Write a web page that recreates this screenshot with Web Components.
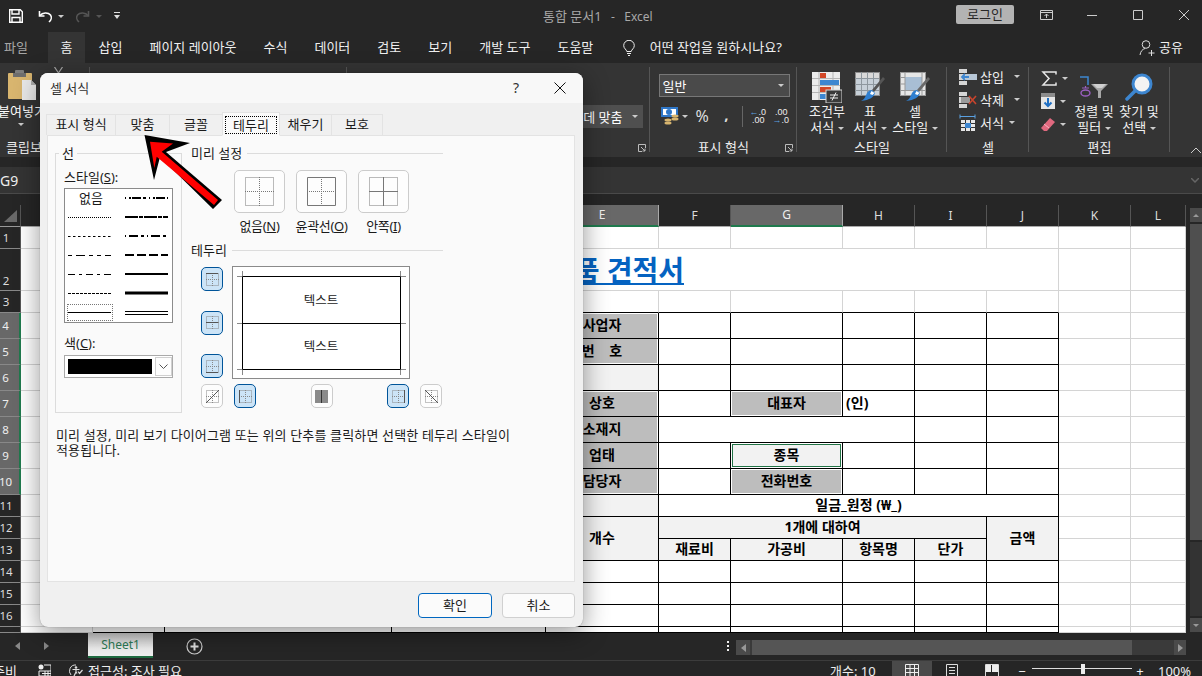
<!DOCTYPE html>
<html lang="ko">
<head>
<meta charset="utf-8">
<title>통합 문서1 - Excel</title>
<style>
  html, body { margin: 0; height: 100%; }
  body {
    position: relative;
    width: 1202px;
    height: 676px;
    overflow: hidden;
    display: flex;
    flex-direction: column;
    background: #262626;
    color: #fff;
    font: 13px/16px "Noto Sans", "Noto Sans CJK KR", sans-serif;
  }
</style>
</head>
<body>
<xl-titlebar></xl-titlebar>
<xl-tabs></xl-tabs>
<xl-ribbon></xl-ribbon>
<xl-formula></xl-formula>
<xl-sheet></xl-sheet>
<xl-sheetbar></xl-sheetbar>
<xl-status></xl-status>
<xl-dialog></xl-dialog>
<xl-arrow></xl-arrow>

<script>
  const ICONS = {
    save: '<svg width="14" height="14" viewBox="0 0 14 14"><path d="M.7.7h10.6l2 2v10.6H.7z" fill="none" stroke="#fff" stroke-width="1.4"/><path d="M3 1v4h7V1M3 13V8.500h8V13" fill="none" stroke="#fff" stroke-width="1.4"/></svg>',
    undo: '<svg width="15" height="13" viewBox="0 0 15 13"><path d="M1.500 1v5h5" fill="none" stroke="#fff" stroke-width="1.600"/><path d="M2 5.500c2.500-3 8-3.500 10.500-.5 1.500 2 .8 5-1.500 7" fill="none" stroke="#fff" stroke-width="1.600"/></svg>',
    redo: '<svg width="15" height="13" viewBox="0 0 15 13"><path d="M13.500 1v5h-5" fill="none" stroke="#555" stroke-width="1.600"/><path d="M13 5.500c-2.500-3-8-3.500-10.500-.5C1 7 1.700 10 4 12" fill="none" stroke="#555" stroke-width="1.600"/></svg>',
    custom: '<svg width="6" height="8" viewBox="0 0 6 8"><path d="M0 .5h6" stroke="#ddd"/><path d="M0 3h6L3 7z" fill="#ddd"/></svg>',
    ribbonopt: '<svg width="13" height="10" viewBox="0 0 13 10"><path d="M.5.500h12v9H.5zM.5 2.500h12" fill="none" stroke="#ccc"/><path d="M6.500 8V4M4.500 6l2-2 2 2" fill="none" stroke="#ccc"/></svg>',
    min: '<svg width="10" height="10" viewBox="0 0 10 10"><path d="M0 5.500h10" stroke="#ccc"/></svg>',
    max: '<svg width="10" height="10" viewBox="0 0 10 10"><path d="M.5.500h9v9h-9z" fill="none" stroke="#ccc"/></svg>',
    close: '<svg width="10" height="10" viewBox="0 0 10 10"><path d="M0 0l10 10M10 0L0 10" stroke="#ccc"/></svg>',
    bulb: '<svg width="12" height="16" viewBox="0 0 12 16"><path d="M3.800 11.500C3.500 9.500 .7 8.500.7 5.600a5.300 5.300 0 0 1 10.600 0c0 2.900-2.800 3.900-3.100 5.900zM4 13.500h4M5 15.500h2" fill="none" stroke="#eee"/></svg>',
    person: '<svg width="16" height="16" viewBox="0 0 16 16"><circle cx="7" cy="4.500" r="3.800" fill="none" stroke="#ddd"/><path d="M1 15c.5-3.500 2.500-6 5-6.500M9.500 13h6M12.500 10v6" fill="none" stroke="#ddd"/></svg>',
    paste: '<svg width="30" height="30" viewBox="0 0 30 30"><rect x="1" y="3" width="24" height="26" rx="1" fill="#d8b56f"/><rect x="8" y="0" width="9" height="6" rx="1" fill="#7d7d7d"/><rect x="6" y="3" width="13" height="4" fill="#6e6e6e"/><path d="M15 10h9l5 5v15H15z" fill="#e8e8e8"/><path d="M24 10v5h5" fill="#aaa"/></svg>',
    cut: '<svg width="9" height="8" viewBox="0 0 9 8"><path d="M.5 0l4 6M8.500 0l-4 6" fill="none" stroke="#aaa" stroke-width="1.200"/></svg>',
    cond: '<svg width="30" height="31" viewBox="0 0 30 31"><rect width="28" height="28" fill="#ececec"/><path d="M0 6.500h28M0 13.500h28M0 20.500h28M7 0v28M21 0v28" stroke="#b5b5b5"/><rect x="8" y="1" width="6" height="5" fill="#d24726"/><rect x="8" y="8" width="19" height="5" fill="#3d86d0"/><rect x="8" y="15" width="11" height="5" fill="#d24726"/><rect x="8" y="22" width="7" height="5" fill="#3d86d0"/><rect x="14" y="18" width="16" height="13" fill="#3a3a3a" stroke="#d8d8d8"/><path d="M18 23h8M18 26h8M24 20.500l-4 8" stroke="#eee" fill="none"/></svg>',
    table: '<svg width="30" height="30" viewBox="0 0 30 30"><rect x=".5" y=".5" width="24" height="23" fill="#c7d0d8" stroke="#8c8c8c"/><rect x="1" y="1" width="23" height="5" fill="#d9d9d9"/><path d="M0 6.500h24M0 12.500h24M0 18.500h24M6.500 0v24M12.500 0v24M18.500 0v24" stroke="#8e979e"/><path d="M30 7l-2-2-11 13 2 2z" fill="#555"/><path d="M17 18l3 3c-1 4-5 7-14 8 4-2 4-4 6-8 1-2 3-3 5-3z" fill="#2f7fd0"/><path d="M16.500 19l3 2-2 2-2.500-1z" fill="#fff"/></svg>',
    cellstyle: '<svg width="30" height="30" viewBox="0 0 30 30"><rect x=".5" y=".5" width="25" height="23" fill="#e6e6e6" stroke="#999"/><rect x="5" y="5" width="17" height="14" fill="#a8bed4"/><path d="M0 5.500h5M0 12h5M0 18.500h25M5 0v24M22 0v24" stroke="#999"/><path d="M30 7l-2-2-11 13 2 2z" fill="#6a6a6a"/><path d="M17 18l3 3c-1 4-5 7-14 8 4-2 4-4 6-8 1-2 3-3 5-3z" fill="#2f7fd0"/><path d="M16.500 19l3 2-2 2-2.500-1z" fill="#fff"/></svg>',
    insert: '<svg width="18" height="16" viewBox="0 0 18 16"><path d="M0 0h8v16H0z" fill="#d5d5d5"/><path d="M0 4.500h8M0 11.500h8" stroke="#333" stroke-width="1"/><rect x="7" y="5" width="11" height="6" fill="#b7c7d6"/><path d="M10 8H3M6 5L3 8l3 3" fill="none" stroke="#3d86d0" stroke-width="1.800"/></svg>',
    del: '<svg width="18" height="16" viewBox="0 0 18 16"><path d="M0 0h8v16H0z" fill="#d5d5d5"/><path d="M0 4.500h8M0 11.500h8" stroke="#333"/><rect x="2" y="5" width="9" height="6" fill="#9a9a9a"/><path d="M10 4l7 8M17 4l-7 8" stroke="#c8442c" stroke-width="1.600"/></svg>',
    format: '<svg width="18" height="17" viewBox="0 0 18 17"><path d="M1 2.500h15M1 .5v4M16 .5v4" stroke="#5aa0e0" fill="none"/><rect x="2" y="6" width="14" height="11" fill="#e6e6e6"/><path d="M2 9.500h14M2 13.500h14M6.500 6v11M11.500 6v11" stroke="#333"/><rect x="6" y="9" width="6" height="5" fill="#3d86d0"/></svg>',
    sigma: '<svg width="16" height="15" viewBox="0 0 16 15"><path d="M15 3.500V1H2l6 6.500L2 14h13v-2.500" fill="none" stroke="#e6e6e6" stroke-width="1.500"/></svg>',
    fill: '<svg width="14" height="16" viewBox="0 0 14 16"><rect width="14" height="16" fill="#e6e6e6"/><rect width="14" height="4" fill="#8c8c8c"/><path d="M7 5v8M3.500 9.500L7 13l3.500-3.500" fill="none" stroke="#1f6fc4" stroke-width="2"/></svg>',
    eraser: '<svg width="14" height="13" viewBox="0 0 14 13"><path d="M9 0l5 4-8 9H3l-3-3z" fill="#e0697f"/><path d="M3 6l5 4" stroke="#f5b5c0"/></svg>',
    sort: '<svg width="30" height="22" viewBox="0 0 30 22"><path d="M1 1h8v8" fill="none" stroke="#3d86d0" stroke-width="1.500"/><path d="M3 12h7M6.500 10v2" stroke="#9b5fc0" fill="none" stroke-width="1.200"/><ellipse cx="6.500" cy="17" rx="4.500" ry="3" fill="none" stroke="#9b5fc0" stroke-width="1.400"/><path d="M12 8h17l-7 7v7h-3v-7z" fill="#a6a6a6"/><path d="M14 8h13l-4 4h-5z" fill="#d0d0d0"/></svg>',
    find: '<svg width="28" height="28" viewBox="0 0 28 28"><circle cx="17" cy="11" r="9" fill="#f3f3f3" stroke="#3d86d0" stroke-width="3"/><path d="M10 18L2 26" stroke="#3d86d0" stroke-width="3.500" stroke-linecap="round"/></svg>',
    money: '<svg width="18" height="18" viewBox="0 0 18 18"><rect x="0" y="0" width="17" height="10" fill="#2f77c8"/><rect x="2" y="2" width="13" height="6" fill="#fff"/><circle cx="8" cy="5" r="3" fill="#2f77c8"/><ellipse cx="14" cy="9" rx="3.500" ry="1.500" fill="#d8b56f"/><ellipse cx="14" cy="12" rx="3.500" ry="1.500" fill="#d8b56f"/><ellipse cx="7" cy="13" rx="3.500" ry="1.500" fill="#d8b56f"/><ellipse cx="7" cy="16" rx="3.500" ry="1.500" fill="#d8b56f"/></svg>',
    launcher: '<svg width="8" height="8" viewBox="0 0 8 8"><path d="M7.500 4V.5H.5v7H4M3 3l4 4M7 4.500V7H4.500" fill="none" stroke="#bbb"/></svg>',
    chevup: '<svg width="10" height="5" viewBox="0 0 10 5"><path d="M0 5l5-5 5 5" fill="none" stroke="#ccc"/></svg>',
    chevdown: '<svg width="8" height="5" viewBox="0 0 8 5"><path d="M0 0l4 4 4-4" fill="none" stroke="#666" stroke-width="1.500"/></svg>',
    macro: '<svg width="13" height="12" viewBox="0 0 13 12"><circle cx="3" cy="3" r="2.500" fill="#eee"/><path d="M6 1h7v11H1V7h12M4 9.500h9M7 7v5M10 7v5" fill="none" stroke="#eee"/></svg>',
    access: '<svg width="14" height="13" viewBox="0 0 14 13"><path d="M2 11A6 6 0 0 1 7 1" fill="none" stroke="#ddd"/><circle cx="7" cy="3.500" r="1.300" fill="#ddd"/><path d="M3.500 5.500h7M7 5.500V8M5 12l2-4 1 1.500M9 7.500l1.500 2 3-3.500" fill="none" stroke="#ddd" stroke-width="1.200"/></svg>',
    normal: '<svg width="14" height="13" viewBox="0 0 14 13"><path d="M.5.500h13v12H.5zM.5 4.500h13M.5 8.500h13M5 .5v12M9.500.5v12" fill="none" stroke="#eee"/></svg>',
    page: '<svg width="14" height="13" viewBox="0 0 14 13"><path d="M1.500.500h11v12h-11zM4 3.500h6M4 6.500h6M4 9.500h6" fill="none" stroke="#ddd"/></svg>',
    pagebreak: '<svg width="14" height="13" viewBox="0 0 14 13"><path d="M.5.500h13v12H.5z" fill="none" stroke="#ddd"/><rect x="1" y="1" width="5" height="7" fill="#eee"/><rect x="7" y="1" width="6" height="7" fill="#eee"/></svg>',
    plusc: '<svg width="17" height="17" viewBox="0 0 17 17"><circle cx="8.500" cy="8.500" r="7.500" fill="none" stroke="#ccc" stroke-width="1.200"/><path d="M8.500 4.500v8M4.500 8.500h8" stroke="#ddd" stroke-width="2"/></svg>'
  };

  class XlIcon extends HTMLElement {
    connectedCallback() {
      const shadow = this.attachShadow({ mode: "open" });
      shadow.innerHTML = `<style>:host{display:inline-flex;line-height:0}</style>${ICONS[this.getAttribute("name")] || ""}`;
    }
  }

  class XlCaret extends HTMLElement {
    connectedCallback() {
      const color = this.getAttribute("color") || "#ccc";
      this.attachShadow({ mode: "open" }).innerHTML = `<style>
        :host{display:inline-block;width:0;height:0;vertical-align:middle;
          border-left:3.5px solid transparent;border-right:3.5px solid transparent;border-top:3.5px solid ${color}}
      </style>`;
    }
  }

  class XlTitlebar extends HTMLElement {
    connectedCallback() {
      this.attachShadow({ mode: "open" }).innerHTML = `<style>
        :host{display:flex;height:32px;flex:none;align-items:center;background:#262626;margin-right:-5px}
        .qat{width:543px;display:flex;align-items:center;padding-left:9px;box-sizing:border-box}
        .title{color:#a8a8a8;white-space:pre}
        .title span{font-size:12px}
        .sp{flex:1}
        .login{width:58px;height:19px;background:#b3b3b3;color:#262626;border-radius:2px;text-align:center;line-height:19px;margin-right:9px;margin-top:-3px}
        .win{width:46px;display:flex;justify-content:center;margin-top:-3px}
      </style>
      <div class="qat">
        <xl-icon name="save"></xl-icon>
        <xl-icon name="undo" style="margin-left:15px"></xl-icon>
        <xl-caret style="margin-left:5px"></xl-caret>
        <xl-icon name="redo" style="margin-left:11px"></xl-icon>
        <xl-caret color="#555" style="margin-left:6px"></xl-caret>
        <xl-icon name="custom" style="margin-left:12px"></xl-icon>
      </div>
      <div class="title">통합 문서1<span>   -   Excel</span></div>
      <div class="sp"></div>
      <div class="login">로그인</div>
      <div class="win"><xl-icon name="ribbonopt"></xl-icon></div>
      <div class="win"><xl-icon name="min"></xl-icon></div>
      <div class="win"><xl-icon name="max"></xl-icon></div>
      <div class="win"><xl-icon name="close"></xl-icon></div>`;
    }
  }

  class XlTabs extends HTMLElement {
    connectedCallback() {
      const names = ["삽입", "페이지 레이아웃", "수식", "데이터", "검토", "보기", "개발 도구", "도움말"];
      this.attachShadow({ mode: "open" }).innerHTML = `<style>
        :host{display:flex;height:31px;flex:none;background:#262626;line-height:31px}
        .t{padding:0 13.5px;white-space:pre;color:#f0f0f0}
        .file{width:48px;box-sizing:border-box;padding:0 0 0 4px;color:#a6a6a6}
        .home{width:37px;padding:0;text-align:center;background:#343434;font-weight:400}
        .ask{display:flex;align-items:center;margin-left:16px;gap:15px;color:#f0f0f0}
        .share{margin-left:auto;display:flex;align-items:center;gap:4px;padding-right:19px;color:#f0f0f0}
      </style>
      <div class="t file">파일</div>
      <div class="t home">홈</div>
      ${names.map(n => `<div class="t">${n}</div>`).join("")}
      <div class="ask"><xl-icon name="bulb"></xl-icon><span>어떤 작업을 원하시나요?</span></div>
      <div class="share"><xl-icon name="person"></xl-icon><span>공유</span></div>`;
    }
  }

  class XlGroup extends HTMLElement {
    connectedCallback() {
      const start = this.hasAttribute("start");
      const launcher = this.hasAttribute("launcher");
      this.attachShadow({ mode: "open" }).innerHTML = `<style>
        :host{display:grid;grid-template-rows:73px 21px;position:relative;box-sizing:border-box;flex:none}
        :host::after{content:"";position:absolute;right:0;top:4px;bottom:5px;width:1px;background:#555}
        .l{text-align:${start ? "left" : "center"};padding-left:${start ? 6 : 0}px;padding-top:1px;line-height:20px;color:#eee;white-space:pre}
        xl-icon{position:absolute;right:4px;bottom:5px}
      </style>
      <div class="c"><slot></slot></div>
      <div class="l">${this.getAttribute("label")}</div>
      ${launcher ? '<xl-icon name="launcher"></xl-icon>' : ""}`;
    }
  }

  class XlBig extends HTMLElement {
    connectedCallback() {
      this.attachShadow({ mode: "open" }).innerHTML = `<style>
        :host{display:flex;flex-direction:column;align-items:center;color:#f0f0f0;white-space:pre;flex:none;padding-top:8px;box-sizing:border-box;height:73px;text-align:center}
        .i{height:32px;display:flex;align-items:center}
        .a{line-height:16px}
      </style>
      <div class="i"><xl-icon name="${this.getAttribute("icon")}"></xl-icon></div>
      <div class="a" style="margin-top:0">${this.getAttribute("a")}</div>
      <div class="a">${this.getAttribute("b")} <xl-caret></xl-caret></div>`;
    }
  }

  class XlRibbon extends HTMLElement {
    connectedCallback() {
      this.attachShadow({ mode: "open" }).innerHTML = `<style>
        :host{display:flex;height:94px;flex:none;background:#343434;margin-bottom:10px;overflow:hidden;position:relative}
        .paste{display:flex;flex-direction:column;align-items:flex-start;padding:7px 0 0 7px}
        .paste span{margin:3px 0 0 -9px;white-space:pre}
        .paste xl-caret{margin:4px 0 0 11px}
        .cut{position:absolute;left:54px;top:4px}
        .align{display:flex;justify-content:flex-end;padding:42px 7px 0 0}
        .mid{display:flex;align-items:center;height:23px;background:#4f4f4f;padding:0 5px 0 0;gap:9px;white-space:pre}
        .num{padding:11px 0 0 9px}
        .combo{width:131px;height:23px;box-sizing:border-box;border:1px solid #777;background:#4a4a4a;display:flex;align-items:center;justify-content:space-between;padding:0 5px 0 3px}
        .numrow{display:flex;align-items:center;height:22px;margin-top:8px;color:#ddd;position:relative}
        .pct{font-size:16px;margin-left:8px;width:25px}
        .comma{font-size:15px;font-weight:700;width:12px;text-align:center;margin-top:-4px}
        .vr{width:1px;height:21px;background:#666;margin:0 7px 0 9px}
        .dec{font:9px/8px "Liberation Sans",sans-serif;width:15px;color:#eee;text-align:right;margin-right:8px;display:block;white-space:pre}
        .dec b{color:#5aa0e0;font-size:9px}
        .big{display:flex;padding-left:10px}
        .cells{display:flex;flex-direction:column;padding:2px 0 0 12px}
        .cr{display:flex;align-items:center;height:23px;white-space:pre;color:#f0f0f0}
        .cr span{margin-left:3px}
        .edit{display:flex}
        .el{display:flex;flex-direction:column;padding:7px 0 0 12px;width:33px;gap:7px;flex:none}
        .el div{display:flex;align-items:center;height:16px;gap:5px}
        .collapse{flex:1;position:relative}
        .collapse xl-icon{position:absolute;left:21px;top:85px}
      </style>
      <xl-group label="클립보드" start style="width:90px">
        <div class="paste">
          <xl-icon name="paste"></xl-icon><span>붙여넣기</span><xl-caret></xl-caret>
          <xl-icon class="cut" name="cut"></xl-icon>
        </div>
      </xl-group>
      <xl-group label="글꼴" launcher style="width:257px"></xl-group>
      <xl-group label="맞춤" launcher style="width:302.500px">
        <div class="align"><div class="mid"><span>가운데 맞춤</span><xl-caret></xl-caret></div></div>
      </xl-group>
      <xl-group label="표시 형식" launcher style="width:147.500px">
        <div class="num">
          <div class="combo"><span>일반</span><xl-caret></xl-caret></div>
          <div class="numrow">
            <xl-icon name="money" style="margin-left:2px"></xl-icon>
            <xl-caret style="margin-left:3px"></xl-caret>
            <span class="pct">%</span>
            <span class="comma">,</span>
            <span class="vr"></span>
            <span class="dec"><b>←</b>.0<br>.00</span>
            <span class="dec">.00<br><b>→</b>.0</span>
          </div>
        </div>
      </xl-group>
      <xl-group label="스타일" style="width:150px">
        <div class="big">
          <xl-big icon="cond" a="조건부" b="서식" style="width:40px;margin-right:4px"></xl-big>
          <xl-big icon="table" a="표" b="서식" style="width:38px;margin-right:3px"></xl-big>
          <xl-big icon="cellstyle" a="셀" b="스타일" style="width:46px"></xl-big>
        </div>
      </xl-group>
      <xl-group label="셀" style="width:82px">
        <div class="cells">
          <div class="cr"><xl-icon name="insert"></xl-icon><span>삽입</span><xl-caret style="margin-left:10px"></xl-caret></div>
          <div class="cr"><xl-icon name="del"></xl-icon><span>삭제</span><xl-caret style="margin-left:10px"></xl-caret></div>
          <div class="cr"><xl-icon name="format"></xl-icon><span>서식</span><xl-caret style="margin-left:5px"></xl-caret></div>
        </div>
      </xl-group>
      <xl-group label="편집" style="width:141px">
        <div class="edit">
          <div class="el">
            <div><xl-icon name="sigma"></xl-icon><xl-caret></xl-caret></div>
            <div><xl-icon name="fill"></xl-icon><xl-caret></xl-caret></div>
            <div><xl-icon name="eraser"></xl-icon><xl-caret></xl-caret></div>
          </div>
          <xl-big icon="sort" a="정렬 및" b="필터" style="width:40px;margin-left:0"></xl-big>
          <xl-big icon="find" a="찾기 및" b="선택" style="width:40px;margin-left:5px"></xl-big>
        </div>
      </xl-group>
      <div class="collapse"><xl-icon name="chevup"></xl-icon></div>`;
    }
  }

  class XlFormula extends HTMLElement {
    connectedCallback() {
      this.attachShadow({ mode: "open" }).innerHTML = `<style>
        :host{display:flex;height:27px;flex:none;background:#343434;align-items:center;border-bottom:1px solid #4a4a4a;box-sizing:border-box;margin-bottom:11px;font-size:14px}
        span{padding-left:0;color:#eee;margin-top:2px}
        xl-icon{margin-left:auto;margin-right:3px}
      </style><span>G9</span><xl-icon name="chevdown"></xl-icon>`;
    }
  }

  class XlSheet extends HTMLElement {
    connectedCallback() {
      const widths = [72, 72, 227, 154, 113, 72, 112, 72, 72, 72, 72, 55];
      const heights = [22, 42, 22, 26, 26, 26, 26, 26, 26, 26, 22, 22, 22, 22, 22, 22, 6];
      const letters = "ABCDEFGHIJKL";
      const cells = [];
      const place = (r, c, rs, cs, cls, text = "", extra = "") =>
        cells.push(`<div class="${cls}" style="grid-area:${r}/${c}/span ${rs}/span ${cs};${extra}">${text}</div>`);

      place(1, 1, 1, 1, "corner", '<svg width="21" height="21"><path d="M4 17L17 5v12z" fill="#6a6a6a"/></svg>');
      letters.split("").forEach((l, i) => {
        place(1, i + 2, 1, 1, "ch" + (l == "E" || l == "G" ? " on" : ""), l);
      });
      heights.forEach((h, i) => {
        const on = i >= 3 && i <= 9;
        place(i + 2, 1, 1, 1, "rh" + (on ? " on" : "") + (i == 1 ? " low" : ""), i == 16 ? "" : i + 1);
      });

      // merged ranges and cell contents, keyed by "row,col" (sheet row, A = 1)
      const E = 5, F = 6, G = 7, H = 8, J = 10;
      const spec = {};
      spec[`2,3`] = { cs: 8, cls: "title", text: "부품 견적서" };
      spec[`4,${E}`] = { cls: "sel st sr", text: "사업자" };
      spec[`5,${E}`] = { cls: "sel sb sr", text: "번    호" };
      spec[`6,${E}`] = { cls: "tint" };
      spec[`7,${E}`] = { cls: "sel st sr", text: "상호" };
      spec[`8,${E}`] = { cls: "sel sr", text: "소재지" };
      spec[`9,${E}`] = { cls: "sel sr", text: "업태" };
      spec[`10,${E}`] = { cls: "sel sr sb", text: "담당자" };
      spec[`11,${E}`] = { cls: "tint" };
      spec[`12,${E}`] = { rs: 2, cls: "tint", text: "개수" };
      spec[`7,${G}`] = { cls: "sel st sr sb sl", text: "대표자" };
      spec[`7,${H}`] = { cls: "left", text: "(인)" };
      spec[`8,${F}`] = { cs: 3 };
      spec[`9,${G}`] = { cls: "active", text: "종목" };
      spec[`10,${G}`] = { cls: "sel sr sb sl", text: "전화번호" };
      spec[`11,${F}`] = { cs: 5, text: "일금_원정 (₩_)" };
      spec[`12,${F}`] = { cs: 4, cls: "tint", text: "1개에 대하여" };
      spec[`12,${J}`] = { rs: 2, cls: "tint", text: "금액" };
      ["재료비", "가공비", "항목명", "단가"].forEach((t, i) => {
        spec[`13,${F + i}`] = { cls: "tint", text: t };
      });

      const taken = new Set();
      for (let r = 1; r <= 17; r++) {
        for (let c = 1; c <= 12; c++) {
          if (taken.has(`${r},${c}`)) continue;
          const s = spec[`${r},${c}`] || {};
          const rs = s.rs || 1, cs = s.cs || 1;
          for (let a = 0; a < rs; a++) for (let b = 0; b < cs; b++) taken.add(`${r + a},${c + b}`);
          const inTable = r >= 4 && c >= 2 && c <= J;
          const rowThree = r == 3 && c >= 2 && c <= J;
          const cls = ["cell", inTable ? "bk" : "", rowThree ? "bb" : "", s.cls || ""].join(" ");
          place(r + 1, c + 1, rs, cs, cls, s.text || "");
        }
      }

      this.attachShadow({ mode: "open" }).innerHTML = `<style>
        :host{display:flex;height:428px;flex:none;overflow:hidden;background:#262626}
        .g{display:grid;flex:none;width:1186px;
          grid-template-columns:21px ${widths.map(w => w + "px").join(" ")};
          grid-template-rows:22px ${heights.map(h => h + "px").join(" ")};
          background:#fff;font-size:14px;font-weight:700;color:#000}
        .g>div{box-sizing:border-box;overflow:hidden;white-space:pre}
        .corner{background:#262626;line-height:0;border-bottom:1px solid #999;border-right:1px solid #555}
        .ch{background:#262626;color:#ddd;font-size:12px;font-weight:400;display:flex;align-items:center;justify-content:center;border-right:1px solid #555;border-bottom:1px solid #aaa}
        .ch.on{background:#686868;color:#eee;border-bottom:2px solid #1f7a4d;border-right-color:#aaa}
        .rh{background:#262626;color:#ddd;font-size:11.500px;font-weight:400;width:21px;padding-right:8px;display:flex;align-items:center;justify-content:center;border-bottom:1px solid #888;border-right:1px solid #555}
        .rh.low{align-items:flex-end;padding-bottom:1px}
        .rh.on{background:#686868;color:#eee;border-right:2px solid #1f7a4d;padding-right:8px}
        .cell{display:flex;align-items:center;justify-content:center;border-right:1px solid #d4d4d4;border-bottom:1px solid #d4d4d4;padding-bottom:1px}
        .bk{border-right-color:#000;border-bottom-color:#000}
        .bb{border-bottom-color:#000}
        .tint{background:#f2f2f2}
        .sel{background:#bdbdbd}
        .st{box-shadow:inset 0 1px 0 #fff}
        .sr{box-shadow:inset -1px 0 0 #fff}
        .st.sr{box-shadow:inset -1px 1px 0 #fff}
        .sb.sr{box-shadow:inset -1px -1px 0 #fff}
        .sl.sr.sb{box-shadow:inset 0 0 0 1px #fff}
        .active{background:#f2f2f2;box-shadow:inset 0 0 0 1px #fff,inset 0 0 0 2px #217346}
        .left{justify-content:flex-start;padding-left:3px}
        .title{justify-content:flex-end;padding-right:374px;font-size:28px;line-height:normal;color:#0563c1;text-decoration:underline;font-weight:700;border-bottom:1px solid #d4d4d4}
        .bar{width:16px;flex:none;padding:3px 0 0 4px;box-sizing:border-box;display:flex;flex-direction:column;gap:2px}
        .up,.down{height:14px;background:#4a4a4a;display:flex;align-items:center;justify-content:center}
        .thumb{height:316px;background:#4f4f4f}
        .track{flex:1;background:#333}
      </style>
      <div class="g">${cells.join("")}</div>
      <div class="bar">
        <div class="up"><xl-caret color="#999" style="transform:rotate(180deg)"></xl-caret></div>
        <div class="thumb"></div>
        <div class="track"></div>
        <div class="down" style="margin-bottom:1px"><xl-caret color="#999"></xl-caret></div>
      </div>`;
    }
  }

  class XlSheetbar extends HTMLElement {
    connectedCallback() {
      this.attachShadow({ mode: "open" }).innerHTML = `<style>
        :host{display:flex;height:28px;flex:none;background:#262626;border-bottom:1px solid #3c3c3c;box-sizing:border-box}
        .nav{width:88px;display:flex;align-items:center;padding:0 0 0 15px;box-sizing:border-box;gap:24px;height:26px}
        .tri{width:0;height:0;border-top:4px solid transparent;border-bottom:4px solid transparent}
        .tab{width:65px;height:25px;box-sizing:border-box;background:linear-gradient(#c9c9c9,#f0f0f0 70%);border-bottom:2px solid #1f6b41;color:#2c7a55;text-align:center;line-height:23px;font-size:12px}
        .plus{margin:5px 0 0 33px;height:17px}
        .dots{margin-left:517px;width:16px;text-align:center;line-height:0;padding-top:8px}
        .dots i{display:block;width:2px;height:2px;background:#eee;margin:0 auto 2px}
        .hs{width:450px;height:15px;margin-top:7px;background:#3a3a3a;display:flex;align-items:stretch}
        .b{width:14px;background:#4a4a4a;display:flex;align-items:center;justify-content:center}
        .th{width:380px;margin-left:2px;background:#555}
        .rest{flex:1}
      </style>
      <div class="nav">
        <div class="tri" style="border-right:5px solid #888"></div>
        <div class="tri" style="border-left:5px solid #888"></div>
      </div>
      <div class="tab">Sheet1</div>
      <div class="plus"><xl-icon name="plusc"></xl-icon></div>
      <div class="dots"><i></i><i></i><i></i></div>
      <div class="hs">
        <div class="b"><div class="tri" style="border-right:5px solid #999"></div></div>
        <div class="th"></div>
        <div class="rest"></div>
        <div class="b" style="width:12px"><div class="tri" style="border-left:5px solid #999"></div></div>
      </div>`;
    }
  }

  class XlStatus extends HTMLElement {
    connectedCallback() {
      this.attachShadow({ mode: "open" }).innerHTML = `<style>
        :host{display:flex;height:15px;flex:none;background:#262626;overflow:hidden;color:#eee;line-height:21px;white-space:pre}
        .it{display:flex;align-items:flex-start;height:15px}
        .it xl-icon{margin-top:3px}
        .vw{width:40px;display:flex;justify-content:center;height:15px;padding-top:3px;box-sizing:border-box}
        .line{width:100px;height:1px;background:#ddd;margin-top:7px;position:relative}
        .line::after{content:"";position:absolute;left:49px;top:-4px;width:4px;height:10px;background:#eee}
      </style>
      <div style="margin-left:-7px;width:45px">준비</div>
      <div class="it" style="width:31px"><xl-icon name="macro"></xl-icon></div>
      <div class="it"><xl-icon name="access"></xl-icon><span style="margin-left:5px">접근성: 조사 필요</span></div>
      <div style="margin-left:auto;width:62px">개수: 10</div>
      <div class="vw" style="background:#4a4a4a"><xl-icon name="normal"></xl-icon></div>
      <div class="vw"><xl-icon name="page"></xl-icon></div>
      <div class="vw"><xl-icon name="pagebreak"></xl-icon></div>
      <div style="width:20px;text-align:center">−</div>
      <div class="line"></div>
      <div style="width:16px;text-align:center">+</div>
      <div style="margin-left:10px;width:44px">100%</div>`;
    }
  }

  // one of the small border toggles beside the preview box
  class XlBorderBtn extends HTMLElement {
    connectedCallback() {
      const on = this.hasAttribute("on");
      const kind = this.getAttribute("kind");
      const solid = {
        top: "M0 .5h12", mid: "M0 6.500h12", bottom: "M0 12.500h12", left: "M.5 0v13", right: "M12.500 0v13",
        diagup: "M0 13L13 0", diagdown: "M0 0l13 13"
      }[kind];
      const inner = kind == "vmid"
        ? '<rect width="13" height="13" fill="#8a8a8a"/><path d="M6.500 0v13" stroke="#333"/>'
        : `<path d="M.5.500h12v12H.5zM6.500 0v13M0 6.500h13" fill="none" stroke="#888" stroke-dasharray="1 1"/><path d="${solid}" stroke="#555" fill="none"/>`;
      this.attachShadow({ mode: "open" }).innerHTML = `<style>
        :host{display:flex;align-items:center;justify-content:center;width:22px;height:24px;box-sizing:border-box;flex:none;
          border-radius:5px;background:${on ? "#cce4f7" : "#fdfdfd"};border:${on ? "1.5px solid #005499" : "1px solid #ccc"}}
      </style><svg width="13" height="13" viewBox="0 0 13 13">${inner}</svg>`;
    }
  }

  class XlPreset extends HTMLElement {
    connectedCallback() {
      const kind = this.getAttribute("kind");
      const dot = 'fill="none" stroke="#777" stroke-dasharray="1 1"';
      const solid = 'fill="none" stroke="#777"';
      const svg = {
        none: `<path d="M.5.500h28v28H.5zM14.500 0v29M0 14.500h29" ${dot}/>`,
        outline: `<path d="M14.500 0v29M0 14.500h29" ${dot}/><path d="M.5.500h28v28H.5z" ${solid}/>`,
        inside: `<path d="M.5.500h28v28H.5z" ${dot}/><path d="M14.500 0v29M0 14.500h29" ${solid}/>`
      }[kind];
      this.attachShadow({ mode: "open" }).innerHTML = `<style>
        :host{display:flex;flex-direction:column;align-items:center;width:51px;flex:none;color:#1a1a1a}
        .b{width:51px;height:43px;box-sizing:border-box;border:1px solid #ccc;border-radius:5px;background:#fdfdfd;display:flex;align-items:center;justify-content:center}
        .t{margin-top:5px;white-space:pre;letter-spacing:-.3px}
      </style>
      <div class="b"><svg width="29" height="29" viewBox="0 0 29 29">${svg}</svg></div>
      <div class="t"><slot></slot></div>`;
    }
  }

  class XlHeading extends HTMLElement {
    connectedCallback() {
      this.attachShadow({ mode: "open" }).innerHTML = `<style>
        :host{display:flex;align-items:center;height:16px;gap:5px;color:#1a1a1a}
        i{flex:1;height:1px;background:#dcdcdc}
      </style><slot></slot><i></i>`;
    }
  }

  class XlLineList extends HTMLElement {
    connectedCallback() {
      const line = (y, w, dash) =>
        `<svg width="43" height="19" viewBox="0 0 43 19"><path d="M0 ${y}h43" stroke="#000" stroke-width="${w}" stroke-dasharray="${dash}"/></svg>`;
      const left = [
        ["9.500", 1, "1 1"], ["9.500", 1, "2.500 2.500"], ["9.500", 1, "4 4 9 4 4 4"],
        ["9.500", 1, "7 4 3 4"], ["9.500", 1, "3 1"]
      ];
      const right = [
        ["9", 2, "1 3 2 1 9 2 3 3"], ["9", 2, "13 1 4 1"], ["9", 2, "1 3 9 3 3 3"],
        ["9", 2, "9 3"], ["9", 2, "none"], ["9", 3, "none"]
      ];
      const rows = [];
      rows.push(`<div class="none">없음</div>`, `<div class="r">${line(...right[0])}</div>`);
      for (let i = 0; i < 5; i++) rows.push(`<div class="l">${line(...left[i])}</div>`, `<div class="r">${line(...right[i + 1])}</div>`);
      rows.push(
        `<div class="l cur">${'<svg width="43" height="15" viewBox="0 0 43 15"><path d="M0 7.500h43" stroke="#000"/></svg>'}</div>`,
        `<div class="r"><svg width="43" height="19" viewBox="0 0 43 19"><path d="M0 8.500h43M0 11.500h43" stroke="#000"/></svg></div>`
      );
      this.attachShadow({ mode: "open" }).innerHTML = `<style>
        :host{display:grid;grid-template-columns:52px 55px;grid-auto-rows:19px;width:109px;height:135px;box-sizing:border-box;
          border:1px solid #8b8b8b;background:#fff;color:#1a1a1a}
        .none{text-align:center;line-height:19px;padding-left:0}
        .l{padding-left:3px;line-height:0}
        .r{padding-left:8px;line-height:0}
        .cur{margin:2px 5px 2px 3px;padding:0;outline:1px dotted #777;width:44px}
      </style>${rows.join("")}`;
    }
  }

  class XlDialog extends HTMLElement {
    connectedCallback() {
      const tabs = ["표시 형식", "맞춤", "글꼴", "테두리", "채우기", "보호"];
      const tabW = [70, 55, 54, 58, 53, 52];
      this.attachShadow({ mode: "open" }).innerHTML = `<style>
        :host{position:absolute;left:40px;top:73px;width:543px;height:554px;box-sizing:border-box;background:#f0f0f0;border-radius:8px;
          box-shadow:0 6px 26px rgba(0,0,0,.42),0 0 1px rgba(0,0,0,.4);color:#1a1a1a;display:flex;flex-direction:column;overflow:hidden}
        .head{height:30px;flex:none;background:#f8f8f8;display:flex;align-items:center;padding-left:10px;color:#333}
        .head .sp{flex:1}
        .q{width:46px;text-align:center;font-size:14px;margin-right:-2px}
        .x{width:46px;display:flex;justify-content:center}
        .tabs{display:flex;align-items:flex-end;height:32px;flex:none;padding-left:7px}
        .tab{height:21px;box-sizing:border-box;border:1px solid #e3e3e3;border-bottom:0;margin-left:-1px;text-align:center;line-height:19px;background:#f0f0f0;white-space:pre}
        .tab.cur{height:24px;background:#fafafa;border-bottom:1px solid #fafafa;margin-bottom:-1px;position:relative;padding:4px 3px 2px;line-height:16px}
        .tab.cur span{display:block;outline:1px dotted #000;height:16px}
        .panel{margin:0 8px 0 7px;height:447px;flex:none;box-sizing:border-box;background:#fafafa;border:1px solid #e3e3e3;padding:9px 0 0 7px}
        .top{display:flex;height:268px}
        fieldset{margin:0;padding:8px 8px 0;width:126px;height:268px;box-sizing:border-box;border:1px solid #dcdcdc;flex:none}
        legend{padding:0 3px;margin-left:-5px;line-height:16px;height:16px}
        .lb{height:19px;line-height:16px}
        .lc{height:20px;margin-top:12px;line-height:16px}
        .combo{width:109px;height:23px;box-sizing:border-box;border:1px solid #aaa;background:#fff;display:flex;padding:3px 0 3px 3px}
        .swatch{width:84px;height:15px;background:#000}
        .dd{width:17px;margin-left:3px;margin-top:-2px;height:19px;border:1px solid #d0d0d0;display:flex;align-items:center;justify-content:center;background:#fdfdfd;box-sizing:border-box}
        .right{margin-left:9px;width:252px;flex:none}
        .presets{display:flex;gap:11px;margin:9px 0 0 43px;height:64px}
        .h2{display:flex;margin-top:8px}
        .area{display:grid;grid-template-columns:22px 178px;column-gap:9px;margin:8px 0 0 10px}
        .side{display:flex;flex-direction:column;justify-content:space-between;padding:1px 0}
        .pv{height:113px;box-sizing:border-box;border:1px solid #8a8a8a;background:#fff;position:relative;display:grid;grid-template-rows:1fr 1fr;padding:9px 0 9px;justify-items:center;align-items:center}
        .pv svg{position:absolute;left:0;top:0}
        .pv span{position:relative;font-size:12.500px;margin-top:3px}
        .bottom{display:flex;margin:5px 0 0 10px;gap:11px;height:24px}
        .bmid{display:flex;justify-content:space-between;width:175px}
        .help{margin:15px 0 0 1px;line-height:15px;white-space:pre;height:32px;letter-spacing:.15px}
        .foot{display:flex;justify-content:flex-end;gap:10px;padding:11px 8px 0 0}
        .btn{height:25px;box-sizing:border-box;border:1px solid #d0d0d0;border-radius:4px;background:#fbfbfb;text-align:center;line-height:23px;width:73px}
        .btn.def{border-color:#0067c0;width:74px}
      </style>
      <div class="head"><span>셀 서식</span><div class="sp"></div><div class="q">?</div>
        <div class="x"><svg width="12" height="12" viewBox="0 0 12 12"><path d="M.5.500l11 11M11.500.5l-11 11" stroke="#111"/></svg></div></div>
      <div class="tabs">
        ${tabs.map((t, i) => i == 3
          ? `<div class="tab cur" style="width:${tabW[i]}px"><span>${t}</span></div>`
          : `<div class="tab" style="width:${tabW[i]}px">${t}</div>`).join("")}
      </div>
      <div class="panel">
        <div class="top">
          <fieldset>
            <legend>선</legend>
            <div class="lb">스타일(<u>S</u>):</div>
            <xl-linelist></xl-linelist>
            <div class="lc">색(<u>C</u>):</div>
            <div class="combo"><div class="swatch"></div><div class="dd"><svg width="9" height="5" viewBox="0 0 9 5"><path d="M.5.500l4 4 4-4" fill="none" stroke="#555"/></svg></div></div>
          </fieldset>
          <div class="right">
            <xl-heading>미리 설정</xl-heading>
            <div class="presets">
              <xl-preset kind="none">없음(<u>N</u>)</xl-preset>
              <xl-preset kind="outline">윤곽선(<u>O</u>)</xl-preset>
              <xl-preset kind="inside">안쪽(<u>I</u>)</xl-preset>
            </div>
            <xl-heading class="h2">테두리</xl-heading>
            <div class="area">
              <div class="side">
                <xl-borderbtn on kind="top"></xl-borderbtn>
                <xl-borderbtn on kind="mid"></xl-borderbtn>
                <xl-borderbtn on kind="bottom"></xl-borderbtn>
              </div>
              <div class="pv">
                <svg width="176" height="111" viewBox="0 0 176 111">
                  <path d="M9.500 9.500h158v93h-158zM9.500 56.500h158" fill="none" stroke="#000"/>
                  <path d="M9.500 4v5M167.500 4v5M4 9.500h5M168 9.500h5M4 102.500h5M168 102.500h5M9.500 103v5M167.500 103v5M4 56.500h5M168 56.500h5" stroke="#888"/>
                </svg>
                <span>텍스트</span><span>텍스트</span>
              </div>
            </div>
            <div class="bottom">
              <xl-borderbtn kind="diagup"></xl-borderbtn>
              <div class="bmid">
                <xl-borderbtn on kind="left"></xl-borderbtn>
                <xl-borderbtn kind="vmid"></xl-borderbtn>
                <xl-borderbtn on kind="right"></xl-borderbtn>
              </div>
              <xl-borderbtn kind="diagdown"></xl-borderbtn>
            </div>
          </div>
        </div>
        <div class="help">미리 설정, 미리 보기 다이어그램 또는 위의 단추를 클릭하면 선택한 테두리 스타일이
적용됩니다.</div>
      </div>
      <div class="foot"><div class="btn def">확인</div><div class="btn">취소</div></div>`;
    }
  }

  class XlArrow extends HTMLElement {
    connectedCallback() {
      this.attachShadow({ mode: "open" }).innerHTML = `<style>
        :host{position:absolute;left:0;top:0;width:0;height:0}
        svg{position:absolute;left:0;top:0;overflow:visible}
      </style>
      <svg width="230" height="215">
        <polygon points="144.500,135 190,143 166,152 222,200 213,209 160,157 154,180" fill="#000"/>
        <polygon points="150,141.700 173,143.500 161.700,151.700 218,200 214,205 156.700,156.700 154.300,168" fill="#f00"/>
      </svg>`;
    }
  }

  window.customElements.define("xl-icon", XlIcon);
  window.customElements.define("xl-caret", XlCaret);
  window.customElements.define("xl-titlebar", XlTitlebar);
  window.customElements.define("xl-tabs", XlTabs);
  window.customElements.define("xl-group", XlGroup);
  window.customElements.define("xl-big", XlBig);
  window.customElements.define("xl-ribbon", XlRibbon);
  window.customElements.define("xl-formula", XlFormula);
  window.customElements.define("xl-sheet", XlSheet);
  window.customElements.define("xl-sheetbar", XlSheetbar);
  window.customElements.define("xl-status", XlStatus);
  window.customElements.define("xl-borderbtn", XlBorderBtn);
  window.customElements.define("xl-preset", XlPreset);
  window.customElements.define("xl-heading", XlHeading);
  window.customElements.define("xl-linelist", XlLineList);
  window.customElements.define("xl-dialog", XlDialog);
  window.customElements.define("xl-arrow", XlArrow);
</script>
</body>
</html>
